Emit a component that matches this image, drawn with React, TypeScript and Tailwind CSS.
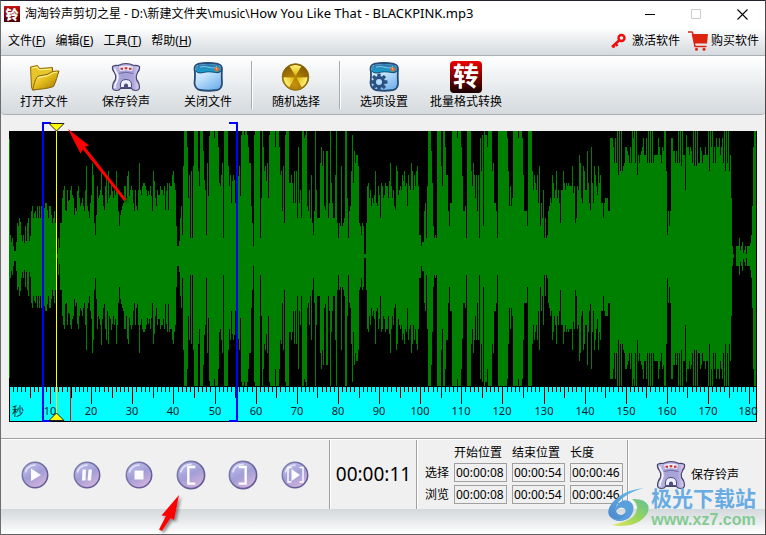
import React from "react";

const FULL = 125;

// Peak levels, one per pixel column: each row is [first column, levels].
const LEVELS: [number, number[]][] = [
  [0, [117, 21, 14, 18, 10, 5, 5, 14, 33, 30, 38, 34, 21, 15, 21, 13, 30, 15, 33, 38, 15, 20, 45, 50, 38, 43, 45, 38, 50, 38]],
  [30, [50, 38, 50, 46, 41, 48, 53, 53, 46, 38, 50, 50, 41, 33, 38, 45, 33, 2, 2, 18, 8, 33, 33, 58, 66, 70, 46, 45, 66, 55]],
  [60, [56, 66, 70, 61, 58, 41, 48, 45, 65, 70, 58, 50, 53, 58, 50, 45, 66, 90, 50, 45, 38, 53, 61, 93, 81, 33, 21, 41, 70, 58]],
  [90, [61, 66, 86, 61, 50, 46, 70, 81, 53, 85, 58, 61, 71, 65, 58, 66, 61, 85, 66, 45, 30, 41, 46, 50, 53, 70, 70, 58, 80, 85]],
  [120, [60, 66, 70, 66, 53, 45, 66, 50, 46, 66, 93, 66, 61, 70, 73, 73, 70, 66, 60, 65, 61, 70, 60, 45, 85, 75, 58, 50, 66, 61]],
  [150, [61, 70, 66, 66, 61, 70, 46, 65, 73, 46, 73, 70, 70, 81, 85, 73, 66, 30, 10, 10, 15, 38, 50, 21, 90, 125, 125, 125, 109, 58]],
  [180, [81, 18, 85, 18, 90, 125, 125, 125, 125, 85, 70, 125, 125, 125, 105, 76, 66, 21, 93, 60, 120, 125, 125, 125, 125, 118, 125, 125, 125, 109]],
  [210, [73, 70, 81, 93, 18, 125, 125, 125, 125, 90, 70, 81, 53, 75, 81, 76, 53, 66, 70, 80, 90, 60, 121, 125, 125, 121, 125, 125, 121, 109]],
  [240, [93, 93, 50, 33, 10, 121, 125, 125, 125, 125, 125, 18, 58, 125, 109, 85, 90, 75, 93, 58, 121, 125, 125, 125, 125, 125, 109, 125, 125, 125]],
  [270, [109, 81, 85, 45, 90, 33, 121, 125, 125, 125, 73, 73, 81, 73, 53, 85, 53, 85, 38, 109, 53, 66, 38, 125, 125, 118, 121, 125, 50, 45]],
  [300, [66, 38, 81, 33, 21, 45, 125, 66, 38, 38, 38, 93, 109, 90, 105, 50, 46, 105, 105, 38, 53, 125, 73, 53, 38, 38, 81, 125, 33, 18]],
  [330, [33, 30, 90, 30, 33, 38, 125, 125, 58, 18, 45, 50, 85, 121, 73, 105, 93, 101, 101, 90, 33, 30, 21, 33, 30, 2, 2, 33, 70, 73]],
  [360, [58, 66, 50, 58, 53, 61, 85, 53, 50, 70, 61, 38, 73, 70, 58, 61, 73, 70, 70, 58, 75, 93, 70, 58, 66, 50, 46, 90, 85, 61]],
  [390, [66, 70, 66, 81, 75, 85, 70, 73, 50, 81, 70, 66, 93, 85, 66, 81, 70, 85, 90, 70, 21, 21, 10, 14, 14, 45, 53, 18, 70, 125]],
  [420, [125, 125, 105, 73, 30, 18, 21, 18, 125, 125, 125, 125, 90, 70, 125, 125, 109, 81, 81, 45, 30, 53, 53, 125, 125, 125, 125, 125, 118, 125]],
  [450, [125, 125, 109, 80, 45, 45, 50, 18, 125, 125, 125, 125, 85, 70, 93, 81, 58, 81, 45, 81, 18, 118, 85, 121, 30, 125, 121, 121, 109, 125]],
  [480, [125, 125, 125, 85, 93, 53, 53, 45, 18, 125, 125, 125, 125, 125, 125, 125, 125, 125, 118, 85, 50, 70, 50, 58, 125, 125, 125, 125, 125, 118]],
  [510, [125, 125, 125, 118, 81, 45, 45, 45, 30, 125, 125, 125, 125, 85, 66, 81, 73, 66, 81, 53, 90, 30, 53, 38, 66, 18, 38, 18, 21, 45]],
  [540, [50, 58, 53, 81, 73, 58, 66, 85, 58, 66, 53, 33, 66, 66, 85, 73, 66, 73, 70, 73, 70, 70, 70, 90, 63, 70, 33, 38, 70, 66]],
  [570, [101, 93, 58, 53, 90, 85, 66, 66, 105, 73, 53, 46, 109, 73, 53, 90, 81, 70, 61, 90, 73, 81, 53, 53, 38, 53, 58, 58, 58, 45]],
  [600, [45, 118, 118, 118, 109, 93, 118, 93, 125, 81, 125, 85, 125, 85, 90, 93, 109, 109, 105, 101, 93, 109, 93, 125, 118, 125, 93, 125, 81, 101]],
  [630, [93, 101, 105, 109, 118, 101, 101, 118, 93, 125, 93, 125, 93, 125, 93, 101, 101, 101, 101, 118, 109, 101, 93, 109, 105, 125, 125, 85, 21, 45]],
  [660, [30, 45, 118, 118, 105, 105, 93, 105, 93, 125, 93, 125, 90, 125, 101, 101, 66, 121, 109, 109, 101, 109, 105, 93, 125, 90, 125, 90, 125, 93]],
  [690, [93, 109, 105, 93, 101, 101, 109, 101, 101, 125, 85, 125, 109, 125, 93, 109, 93, 118, 109, 109, 118, 101, 109, 118, 93, 125, 85, 125, 93, 125]],
  [720, [85, 101, 58, 10, 2, 0, 0, 10, 10, 10, 18, 6, 10, 14, 3, 6, 10, 2, 10, 10, 10, 13, 21, 50, 109, 125, 125]],
];

const wavePath = LEVELS.map(([start, row]) =>
  row
    .map((level, i) => {
      const down = Math.min(130, Math.round(level * 1.04));
      return `M${start + i} ${FULL + 9 - level}h1v${level + down}h-1z`;
    })
    .join("")
).join("");

const SECOND = 4.112;
const seconds = Array.from({ length: 182 }, (_, i) => i);

function tickHeight(s: number) {
  if (s % 10 === 0) return 17;
  return s % 5 === 0 ? 11 : 5;
}

function Waveform() {
  return (
    <svg viewBox="0 0 748 300" className="block h-auto w-full overflow-visible" role="img" aria-label="波形">
      <defs>
        <filter id="arrowShadow" x="-30%" y="-30%" width="170%" height="170%">
          <feDropShadow dx="2" dy="2" stdDeviation="1.5" floodOpacity="0.45" />
        </filter>
      </defs>
      <rect x="0" y="9" width="748" height="256" fill="#000" />
      <path d={wavePath} fill="#008000" shapeRendering="crispEdges" />
      <rect x="0" y="265" width="748" height="35" fill="#000" />
      <rect x="1" y="265" width="746" height="34" fill="#0ff" />
      <g shapeRendering="crispEdges">
        {seconds.map((s) => (
          <rect key={s} x={Math.round(s * SECOND)} y="265" width="1" height={tickHeight(s)} fill="#000" />
        ))}
      </g>
      <g fontSize="11" fill="#00202c" className="font-['Noto_Sans','Noto_Sans_CJK_SC',sans-serif]">
        <text x="3" y="294" fontSize="12">秒</text>
        {seconds
          .filter((s) => s > 0 && s % 10 === 0)
          .map((s) => (
            <text key={s} x={s === 180 ? 739 : Math.round(s * SECOND)} y="293" textAnchor="middle">
              {s}
            </text>
          ))}
      </g>
      <g shapeRendering="crispEdges">
        <path d="M61 265h1v34h-1z" fill="#f00" />
        <path d="M33 0h9v2h-7v296h7v2h-9zM229 0h-9v2h7v296h-7v2h9z" fill="#00f" />
        <path d="M47 8h1v284h-1z" fill="#ff0" />
      </g>
      <path d="M40 1.500h15l-7.500 7.500z" fill="#ff0" stroke="#222" />
      <path d="M40 298.500h15l-7.500-7.500z" fill="#ff0" stroke="#222" />
      <g filter="url(#arrowShadow)" fill="#f00">
        <path d="M59 7L80 23.500L75.800 24.800L117 77L115 79L73.800 27.300L71.500 31.500z" />
      </g>
    </svg>
  );
}

function FolderIcon() {
  return (
    <svg viewBox="0 0 32 32" className="size-8">
      <defs>
        <linearGradient id="fold" x1="0" y1="0" x2="1" y2="1">
          <stop offset="0" stopColor="#fff07a" />
          <stop offset=".45" stopColor="#e6bf1c" />
          <stop offset="1" stopColor="#9c7000" />
        </linearGradient>
      </defs>
      <path d="M2.500 6L9.500 4.500L11.500 7.500L24.500 6.500V12L8 28.500L4.500 29L3.500 26z" fill="#e8c62a" stroke="#8f6a08" />
      <path d="M4 7l5-1 2 3 12-1" fill="none" stroke="#fff59a" />
      <path d="M4.500 29C6 24 6.500 19 9.500 15.500C12 14 19 14.500 22 12C24 10 28 10 31 10C29 15 28.500 20 25.500 25.500C19 28 12 28 4.500 29z" fill="url(#fold)" stroke="#86620a" />
      <path d="M9.500 17c4-2 9-1 12.500-3.500 2-1.500 4-2 7-2.300" fill="none" stroke="#fff7a0" />
    </svg>
  );
}

function PhoneIcon() {
  return (
    <svg viewBox="0 0 32 32" className="size-8">
      <defs>
        <linearGradient id="phone" x1="0" y1="0" x2="1" y2="0">
          <stop offset="0" stopColor="#c9c6ee" />
          <stop offset=".35" stopColor="#a5a1d6" />
          <stop offset=".75" stopColor="#aaa6da" />
          <stop offset="1" stopColor="#e6d2f0" />
        </linearGradient>
      </defs>
      <path
        d="M2.500 5.500Q5 4 8 4.500Q12 2.500 16 2.500T24 4.500Q27 4 29.500 5.500Q30 9 27.500 11.500Q25.500 15 26.500 18.500Q29.500 22 29.500 27Q29 29.500 25.500 29.500Q22.500 29.500 21.500 27.500H10.500Q9.500 29.500 6.500 29.500Q3 29.500 2.500 27Q2.500 22 5.500 18.500Q6.500 15 4.500 11.500Q2 9 2.500 5.500z"
        fill="url(#phone)"
        stroke="#48466f"
        strokeWidth="1.200"
      />
      <path d="M9 5.800Q16 3.200 23 5.800L22 10Q16 8.700 10 10z" fill="#edeafc" />
      <path d="M10.500 7.800h2.500M14.700 7.300h2.600M19 7.800h2.500" stroke="#cc2a1a" strokeWidth="2" />
      <path d="M8.500 12.500Q16 10 23.500 12.500" fill="none" stroke="#6f6ba3" />
      <path d="M4.500 7.500Q5 10 7.500 13Q8.500 16.500 7 20Q4.500 23.500 5 27" fill="none" stroke="#f6f3ff" strokeWidth="1.600" />
      <path d="M10.500 26.500Q9.500 18.500 16 18.500Q22.500 18.500 21.500 26.500z" fill="#f0eeff" stroke="#504d80" />
      <path d="M14 26Q13.500 22.500 16 22.500T18 26z" fill="#504d80" />
    </svg>
  );
}

function PanelShape() {
  return (
    <>
      <defs>
        <linearGradient id="glass" x1="0" y1="0" x2=".6" y2="1">
          <stop offset="0" stopColor="#f5fbff" />
          <stop offset=".5" stopColor="#c4e2fb" />
          <stop offset="1" stopColor="#79b6ee" />
        </linearGradient>
        <linearGradient id="teal" x1="0" y1="0" x2="0" y2="1">
          <stop offset="0" stopColor="#3477ab" />
          <stop offset="1" stopColor="#10a5cf" />
        </linearGradient>
      </defs>
      <path d="M6 3Q16 1 26 3Q30 4 30 8Q29.500 13 30 22Q30 28 25 29Q16 30.500 8 29Q3 28 2.500 22Q3.500 13 2.500 8Q2.500 4 6 3z" fill="url(#glass)" stroke="#244c76" strokeWidth="1.800" />
      <path d="M3.500 8Q3 4.500 8 3.500Q16 2.300 25 3.500Q29.500 4.500 29 9Q28 12 24 11.500Q16 10 11 11.500Q5 13 3.500 8z" fill="url(#teal)" />
      <path d="M3.500 9.500Q6 13 11 11.500T24 11.500Q27 12 29 10" fill="none" stroke="#12557f" strokeWidth="1.200" />
      <path d="M8 6Q13 5 18 6.500T25 5" fill="none" stroke="#7cc9e4" />
      <circle cx="25" cy="8.300" r="2.200" fill="#ef6820" />
      <circle cx="24.500" cy="7.700" r=".8" fill="#ffc18b" />
    </>
  );
}

function CloseFileIcon() {
  return (
    <svg viewBox="0 0 32 32" className="size-8">
      <PanelShape />
    </svg>
  );
}

function SettingsIcon() {
  return (
    <svg viewBox="0 0 32 32" className="size-8">
      <PanelShape />
      <g fill="#2c5184">
        <circle cx="11" cy="21" r="6" />
        {[0, 45, 90, 135].map((a) => (
          <rect key={a} x="9.300" y="12.500" width="3.400" height="17" rx=".6" transform={`rotate(${a} 11 21)`} />
        ))}
      </g>
      <circle cx="11" cy="21" r="3" fill="#b9dcf8" />
    </svg>
  );
}

function RandomIcon() {
  return (
    <svg viewBox="0 0 32 32" className="size-8">
      <defs>
        <radialGradient id="rad" cx=".45" cy=".75" r=".8">
          <stop offset="0" stopColor="#c8920e" />
          <stop offset="1" stopColor="#7d5500" />
        </radialGradient>
        <linearGradient id="blade" x1="0" y1="0" x2="0" y2="1">
          <stop offset="0" stopColor="#fdf27c" />
          <stop offset="1" stopColor="#deb400" />
        </linearGradient>
      </defs>
      <circle cx="15.500" cy="16" r="13.300" fill="url(#rad)" stroke="#8c6c14" />
      {[0, 120, 240].map((a) => (
        <path key={a} d="M15.500 15L9.700 5.500Q15.500 2.500 21.300 5.500z" fill="url(#blade)" transform={`rotate(${a} 15.500 16)`} />
      ))}
      <circle cx="15.500" cy="16" r="1.800" fill="#b88700" />
    </svg>
  );
}

function ConvertIcon() {
  return (
    <span className="flex size-8 items-center justify-center rounded bg-linear-to-b from-[#f00000] to-[#180000] font-['Liberation_Sans','Noto_Sans_CJK_SC',sans-serif] text-[26px] leading-8 font-bold text-white">
      转
    </span>
  );
}

function ToolButton({ label, icon }: { label: string; icon: React.ReactNode }) {
  return (
    <button type="button" className="flex w-[82px] flex-col items-center">
      {icon}
      <span className="leading-[18px]">{label}</span>
    </button>
  );
}

function ToolDivider() {
  return (
    <div className="flex w-[6px] pl-[2px]">
      <div className="h-12 w-px bg-[#a8abad]" />
      <div className="h-12 w-px bg-white" />
    </div>
  );
}

function Menu({ label, hot }: { label: string; hot: string }) {
  return (
    <button type="button">
      {label}(<u>{hot}</u>)
    </button>
  );
}

function RoundButton({ label, big, children }: { label: string; big?: boolean; children: React.ReactNode }) {
  return (
    <button type="button" aria-label={label} className="flex w-[52px] items-center justify-center">
      <svg viewBox="0 0 28 28" className={big ? "size-[30px]" : "size-7"}>
        <defs>
          <linearGradient id="orb" x1=".2" y1="0" x2=".75" y2="1">
            <stop offset="0" stopColor="#c2c1ec" />
            <stop offset=".5" stopColor="#a29ed6" />
            <stop offset="1" stopColor="#d8b4dc" />
          </linearGradient>
          <linearGradient id="orbRim" x1="0" y1="0" x2="1" y2="1">
            <stop offset="0" stopColor="#8583b4" />
            <stop offset="1" stopColor="#57518c" />
          </linearGradient>
        </defs>
        <circle cx="14" cy="14" r="12.700" fill="url(#orb)" stroke="url(#orbRim)" strokeWidth="1.500" />
        <path d="M4.500 11Q6.500 4.500 14 4" fill="none" stroke="#e6e7ff" strokeWidth="1.500" strokeLinecap="round" />
        {children}
      </svg>
    </button>
  );
}

function Separator() {
  return (
    <div className="flex w-[2px] shrink-0">
      <div className="w-px bg-[#a0a0a0]" />
      <div className="w-px bg-white" />
    </div>
  );
}

const TIMES = [
  { label: "选择", values: ["00:00:08", "00:00:54", "00:00:46"] },
  { label: "浏览", values: ["00:00:08", "00:00:54", "00:00:46"] },
];
const HEADS = ["开始位置", "结束位置", "长度"];

function TimeGrid() {
  return (
    <div className="grid w-[209px] shrink-0 grid-cols-[24px_53px_53px_53px] content-start items-center gap-x-[5px] gap-y-[3px] pt-[6px] pl-[7px]">
      <span />
      {HEADS.map((h) => (
        <span key={h} className="leading-[14px]">{h}</span>
      ))}
      {TIMES.map((row) => (
        <React.Fragment key={row.label}>
          <span className="whitespace-nowrap">{row.label}</span>
          {row.values.map((v, i) => (
            <input
              key={HEADS[i]}
              aria-label={row.label + HEADS[i]}
              defaultValue={v}
              className="h-[19px] w-full border border-[#a0a0a0] bg-[#f0f0f0] pl-px text-xs outline-none"
            />
          ))}
        </React.Fragment>
      ))}
    </div>
  );
}

function Watermark() {
  return (
    <div className="pointer-events-none absolute right-[9px] bottom-1 flex items-center">
      <svg viewBox="0 0 44 42" className="h-[42px] w-11">
        <defs>
          <linearGradient id="swirl" x1="0" y1="1" x2="1" y2="0">
            <stop offset="0" stopColor="#4a86cc" />
            <stop offset="1" stopColor="#69c3f0" />
          </linearGradient>
          <linearGradient id="leaf" x1="0" y1="1" x2="1" y2="0">
            <stop offset="0" stopColor="#e4e65c" />
            <stop offset=".5" stopColor="#97d45c" />
            <stop offset="1" stopColor="#62bf98" />
          </linearGradient>
        </defs>
        <path d="M37 1Q16 3 5 16Q-3 27 6 32Q14 36 22 31Q28 24 22 19Q15 15 10 22Q15 19 18 22Q20 26 15 28Q8 28 9 20Q13 8 37 1z" fill="url(#swirl)" />
        <path d="M9 20Q14 11 22 14Q29 18 25 27Q21 34 12 34Q9 34 6 32Q15 33 20 28Q24 23 20 19Q15 16 9 24z" fill="#5a9edb" />
        <path d="M25 12Q37 11 41 18Q44 26 33 34Q22 41 5 38Q20 35 27 29Q34 19 25 12z" fill="url(#leaf)" />
      </svg>
      <div className="flex flex-col items-center">
        <span className="text-[21px] leading-6 font-bold text-[#68ace3]">极光下载站</span>
        <span className="font-['Liberation_Sans',Arial,sans-serif] text-base leading-5 font-bold text-[#84cb92]">www.xz7.com</span>
      </div>
    </div>
  );
}

export default function App() {
  return (
    <div className="relative flex flex-col border border-t-[#24222c] border-r-[#4d4545] border-b-[#606060] border-l-[#6d6d6d] bg-[#f0f0f0] font-['Noto_Sans','Noto_Sans_CJK_SC',sans-serif] text-xs text-black">
      <header className="flex h-[26px] items-center bg-white pl-[3px]">
        <span className="flex size-4 items-center justify-center bg-linear-to-b from-[#c81414] to-[#480000] text-[13px] leading-4 font-black text-white">铃</span>
        <h1 className="ml-[5px] flex-1 text-xs whitespace-nowrap">
          淘淘铃声剪切之星 - D:\新建文件夹\music\<span className="text-[13px]">How You Like That - BLACKPINK.mp3</span>
        </h1>
        <div className="flex">
          <button type="button" aria-label="最小化" className="flex w-[46px] justify-center">
            <svg viewBox="0 0 11 11" className="size-[11px]"><path d="M0 5.500h10" stroke="#000" /></svg>
          </button>
          <button type="button" aria-label="最大化" className="flex w-[46px] justify-center">
            <svg viewBox="0 0 11 11" className="size-[11px]"><path d="M.5.5h9v9h-9z" fill="none" stroke="#ccc" /></svg>
          </button>
          <button type="button" aria-label="关闭" className="flex w-[46px] justify-center">
            <svg viewBox="0 0 11 11" className="size-[11px]"><path d="M.5.5l10 10M10.500.5l-10 10" stroke="#000" strokeWidth="1.100" /></svg>
          </button>
        </div>
      </header>

      <nav className="flex h-[29px] items-center justify-between border-b border-[#adb0b2] bg-linear-to-b from-white to-[#d5dade] pr-[6px] pl-[7px]">
        <div className="flex gap-[10px]">
          <Menu label="文件" hot="F" />
          <Menu label="编辑" hot="E" />
          <Menu label="工具" hot="T" />
          <Menu label="帮助" hot="H" />
        </div>
        <div className="flex items-center gap-2">
          <button type="button" className="flex items-center gap-[5px]">
            <svg viewBox="0 0 16 16" className="size-4" fill="none" stroke="#f00c0c">
              <circle cx="10.500" cy="5" r="3" strokeWidth="2.400" />
              <path d="M8 7.500L1 14M4.500 10.500l2 2.500M2 12.500l1.500 2" strokeWidth="2.400" />
            </svg>
            激活软件
          </button>
          <button type="button" className="flex items-center gap-[3px]">
            <svg viewBox="0 0 20 20" className="size-5">
              <path d="M0 1h4l1 2" fill="none" stroke="#dc2410" strokeWidth="1.500" />
              <path d="M4 3H20L19 12.500H6.500z" fill="#dc2410" />
              <path d="M4.500 3L7 15.500H18.500" fill="none" stroke="#dc2410" strokeWidth="1.500" />
              <circle cx="8.500" cy="18.300" r="1.500" fill="#dc2410" />
              <circle cx="16" cy="18.300" r="1.500" fill="#dc2410" />
            </svg>
            购买软件
          </button>
        </div>
      </nav>

      <div className="flex h-[59px] items-start rounded-b-sm border-b border-[#adb0b2] bg-linear-to-b from-white to-[#d5dade] pt-[5px] pl-[2px]">
        <ToolButton label="打开文件" icon={<FolderIcon />} />
        <ToolButton label="保存铃声" icon={<PhoneIcon />} />
        <ToolButton label="关闭文件" icon={<CloseFileIcon />} />
        <ToolDivider />
        <ToolButton label="随机选择" icon={<RandomIcon />} />
        <ToolDivider />
        <ToolButton label="选项设置" icon={<SettingsIcon />} />
        <ToolButton label="批量格式转换" icon={<ConvertIcon />} />
      </div>

      <main className="px-2 pt-[7px] pb-4">
        <Waveform />
      </main>

      <section className="border-t border-[#a0a0a0]">
        <div className="flex h-[70px] border-t border-white">
          <div className="flex w-[328px] shrink-0 pl-2">
            <RoundButton label="播放">
              <path d="M10 7.500L20 14L10 20z" fill="#fafaff" />
            </RoundButton>
            <RoundButton label="暂停">
              <path d="M9.500 8.500h3.500l-.5 11h-3.500zM15.500 8.500h3.500l-1 11h-3.500z" fill="#fafaff" />
            </RoundButton>
            <RoundButton label="停止">
              <rect x="9.500" y="9.500" width="9" height="9" fill="#fafaff" />
            </RoundButton>
            <RoundButton label="选择开始" big>
              <path d="M18 6.500h-6.500v15.500h6.500" fill="none" stroke="#fff" strokeWidth="2.200" />
            </RoundButton>
            <RoundButton label="选择结束" big>
              <path d="M10 6.500h6.500v15.500h-6.500" fill="none" stroke="#fff" strokeWidth="2.200" />
            </RoundButton>
            <RoundButton label="播放选区">
              <path d="M10.500 6.500h-3.500v14.500h3.500M18.500 6.500h3.500v14.500h-3.500" fill="none" stroke="#fff" strokeWidth="1.400" />
              <path d="M10.500 8L19 14L10.500 20z" fill="#fafaff" />
            </RoundButton>
          </div>
          <Separator />
          <output className="flex w-[85px] shrink-0 items-center justify-center text-[19px]">00:00:11</output>
          <Separator />
          <TimeGrid />
          <Separator />
          <button type="button" className="flex flex-1 items-center justify-center gap-1">
            <PhoneIcon />
            保存铃声
          </button>
        </div>
      </section>
      <footer className="h-[25px] bg-linear-to-b from-[#d3d8dc] to-white" />

      <svg viewBox="0 0 28 44" className="pointer-events-none absolute bottom-0 left-[157px] h-11 w-7 overflow-visible">
        <g filter="url(#arrowShadow)">
          <path d="M21 5L16 30L12.500 28L4 41L1 39.500L8 26L3.500 25.500z" fill="#f00" />
        </g>
      </svg>
      <Watermark />
    </div>
  );
}
